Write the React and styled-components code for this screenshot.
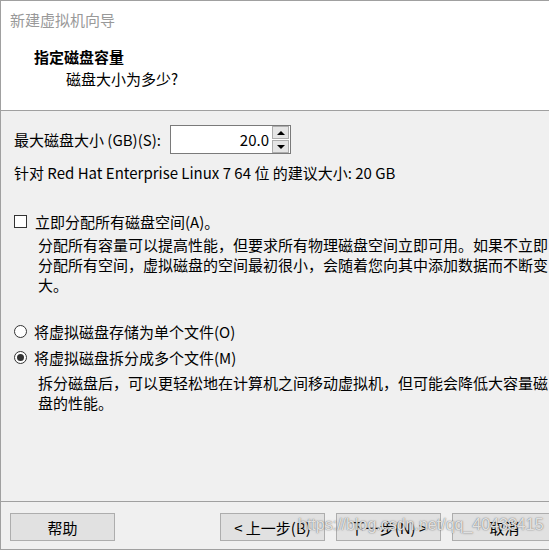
import React from 'react';
import styled, { createGlobalStyle } from 'styled-components';

const GlobalStyle = createGlobalStyle`
  html, body {
    margin: 0;
    padding: 0;
    background: #ffffff;
  }
  body {
    font-family: "Noto Sans CJK SC", "Noto Sans", sans-serif;
    font-size: 15px;
    color: #000;
  }
`;

const Window = styled.div`
  position: relative;
  width: 549px;
  height: 550px;
  box-sizing: border-box;
  border-top: 1px solid #a0a0a0;
  border-left: 1px solid #a0a0a0;
  border-bottom: 1px solid #a0a0a0;
  display: flex;
  flex-direction: column;
  overflow: hidden;
  background: #f0f0f0;
`;

const TitleBar = styled.div`
  height: 36px;
  display: flex;
  align-items: center;
  padding-left: 9px;
  background: #fff;
  color: #999;
  font-size: 15px;
`;

const Header = styled.div`
  height: 63px;
  background: #fff;
  border-bottom: 1px solid #a0a0a0;
  padding-top: 10px;
  display: flex;
  flex-direction: column;
`;

const HeaderTitle = styled.div`
  padding-left: 33px;
  font-weight: bold;
  line-height: 20px;
  height: 20px;
`;

const HeaderSub = styled.div`
  padding-left: 65px;
  margin-top: 2px;
  line-height: 20px;
`;

const Body = styled.div`
  flex: 1;
  display: flex;
  flex-direction: column;
  padding-left: 13px;
  border-bottom: 1px solid #a0a0a0;
`;

const SizeRow = styled.div`
  display: flex;
  align-items: center;
  margin-top: 14px;
  height: 29px;
`;

const Label = styled.span`
  width: 156px;
`;

const Spin = styled.div`
  display: flex;
  height: 29px;
  border: 1px solid #7a7a7a;
  box-sizing: border-box;
  background: #fff;
`;

const SpinValue = styled.div`
  width: 100px;
  text-align: right;
  line-height: 27px;
  padding-right: 2px;
  box-sizing: border-box;
`;

const SpinButtons = styled.div`
  display: flex;
  flex-direction: column;
  gap: 1px;
  padding: 0 1px;
  background: #fff;
`;

const SpinButton = styled.div`
  width: 17px;
  height: 13px;
  box-sizing: border-box;
  border: 1px solid #adadad;
  background: #e5e5e5;
  display: flex;
  align-items: center;
  justify-content: center;
`;

const Arrow = styled.span`
  width: 0;
  height: 0;
  border-left: 4px solid transparent;
  border-right: 4px solid transparent;
  ${(p) => (p.$up ? 'border-bottom: 4px solid #000;' : 'border-top: 4px solid #000;')}
`;

const Line = styled.div`
  line-height: 20px;
  margin-top: ${(p) => p.$mt || 0}px;
`;

const OptionRow = styled.label`
  display: flex;
  align-items: center;
  height: 20px;
  margin-top: ${(p) => p.$mt || 0}px;
`;

const CheckBox = styled.span`
  width: 13px;
  height: 13px;
  box-sizing: border-box;
  border: 1px solid #333;
  background: #fff;
  margin-right: 8px;
`;

const Radio = styled.span`
  width: 13px;
  height: 13px;
  box-sizing: border-box;
  border: 1px solid #333;
  border-radius: 50%;
  background: #fff;
  margin-right: 7px;
  display: flex;
  align-items: center;
  justify-content: center;
  &::after {
    content: '';
    width: 7px;
    height: 7px;
    border-radius: 50%;
    background: ${(p) => (p.$checked ? '#333' : 'transparent')};
  }
`;

const Hint = styled.p`
  margin: ${(p) => p.$mt || 0}px 0 0 24px;
  line-height: 20px;
  width: 520px;
`;

const Footer = styled.div`
  height: 47px;
  display: flex;
  align-items: flex-start;
  padding: 11px 0 0 9px;
  box-sizing: border-box;
`;

const Button = styled.button`
  flex: none;
  width: 105px;
  height: 28px;
  margin-left: ${(p) => p.$ml || 0}px;
  padding: 0;
  border: 1px solid #adadad;
  background: #e1e1e1;
  font-family: inherit;
  font-size: 15px;
  color: #000;
`;

const Watermark = styled.div`
  position: absolute;
  left: 297px;
  top: 515px;
  font-family: "Liberation Sans", Arial, sans-serif;
  font-size: 16px;
  color: rgba(255, 255, 255, 0.8);
  text-shadow: 0 0 1px rgba(90, 90, 90, 0.9), 0 0 2px rgba(120, 120, 120, 0.5);
  white-space: nowrap;
  pointer-events: none;
`;

export default function App() {
  return (
    <>
      <GlobalStyle />
      <Window>
        <TitleBar>新建虚拟机向导</TitleBar>
        <Header>
          <HeaderTitle>指定磁盘容量</HeaderTitle>
          <HeaderSub>磁盘大小为多少?</HeaderSub>
        </Header>
        <Body>
          <SizeRow>
            <Label>最大磁盘大小 (GB)(S):</Label>
            <Spin>
              <SpinValue>20.0</SpinValue>
              <SpinButtons>
                <SpinButton>
                  <Arrow $up />
                </SpinButton>
                <SpinButton>
                  <Arrow />
                </SpinButton>
              </SpinButtons>
            </Spin>
          </SizeRow>
          <Line $mt={9}>针对 Red Hat Enterprise Linux 7 64 位 的建议大小: 20 GB</Line>
          <OptionRow $mt={28}>
            <CheckBox />
            立即分配所有磁盘空间(A)。
          </OptionRow>
          <Hint $mt={4}>
            分配所有容量可以提高性能，但要求所有物理磁盘空间立即可用。如果不立即分配所有空间，虚拟磁盘的空间最初很小，会随着您向其中添加数据而不断变大。
          </Hint>
          <OptionRow $mt={26}>
            <Radio />
            将虚拟磁盘存储为单个文件(O)
          </OptionRow>
          <OptionRow $mt={6}>
            <Radio $checked />
            将虚拟磁盘拆分成多个文件(M)
          </OptionRow>
          <Hint $mt={6}>
            拆分磁盘后，可以更轻松地在计算机之间移动虚拟机，但可能会降低大容量磁盘的性能。
          </Hint>
        </Body>
        <Footer>
          <Button>帮助</Button>
          <Button $ml={105}>&lt; 上一步(B)</Button>
          <Button $ml={11}>下一步(N) &gt;</Button>
          <Button $ml={11}>取消</Button>
        </Footer>
        <Watermark>https://blog.csdn.net/qq_40433415</Watermark>
      </Window>
    </>
  );
}
